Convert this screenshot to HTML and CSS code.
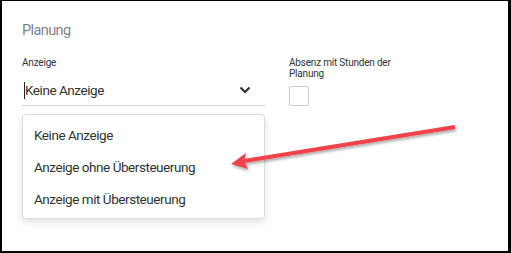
FILE: index.html
```html
<!DOCTYPE html>
<html lang="de">

<head>
  <meta charset="UTF-8">
  <title>Planung</title>
  <link rel="stylesheet" href="styles.css">
</head>

<body>
  <div class="frame">
    <h2 class="section-title">Planung</h2>
    <div class="row">
      <div class="field">
        <label class="field-label">Anzeige</label>
        <div class="select">
          <span class="caret"></span>
          <span class="select-value">Keine Anzeige</span>
          <svg class="chevron" width="12" height="8" viewBox="0 0 12 8">
            <path d="M1.5 1.5 L6 6 L10.5 1.5" fill="none" stroke="#333" stroke-width="2.2"/>
          </svg>
        </div>
        <ul class="dropdown">
          <li>Keine Anzeige</li>
          <li>Anzeige ohne Übersteuerung</li>
          <li>Anzeige mit Übersteuerung</li>
        </ul>
      </div>
      <div class="field field-small">
        <label class="field-label">Absenz mit Stunden der Planung</label>
        <div class="checkbox"></div>
      </div>
    </div>

    <!-- Pfeil auf die zweite Option -->
    <svg class="arrow" width="511" height="253" viewBox="0 0 511 253">
      <defs>
        <filter id="shadow" x="-10%" y="-50%" width="120%" height="200%">
          <feDropShadow dx="1" dy="2" stdDeviation="1.5" flood-color="#000" flood-opacity="0.35"/>
        </filter>
      </defs>
      <g filter="url(#shadow)">
        <line x1="455" y1="127" x2="244" y2="161" stroke="#f0434b" stroke-width="4"/>
        <path d="M231 164 L246 153 L244 161 L248 169 Z" fill="#f0434b"/>
      </g>
    </svg>
  </div>
</body>

</html>
```

FILE: styles.css
```css
body {
  margin: 0;
  font-family: Roboto, "Liberation Sans", sans-serif;
  color: #333;
  background: #fff;
}

.frame {
  position: relative;
  box-sizing: border-box;
  width: 511px;
  height: 253px;
  border-style: solid;
  border-color: #000;
  border-width: 1px 3px 2px 2px;
  padding: 21px 20px 0 20px;
  background: #fff;
}

.section-title {
  margin: 0;
  font-size: 14.5px;
  font-weight: 400;
  line-height: 18px;
  letter-spacing: -0.6px;
  color: #7b8490;
}

.row {
  display: flex;
  gap: 24px;
  margin-top: 17px;
}

.field {
  width: 243px;
}

.field-small {
  width: 110px;
}

.field-label {
  display: block;
  font-size: 10px;
  line-height: 11px;
  letter-spacing: -0.2px;
  color: #333;
}

.select {
  display: flex;
  align-items: center;
  box-sizing: border-box;
  height: 34px;
  margin-top: 4px;
  padding-top: 3px;
  border-bottom: 1px solid #d2d2d2;
}

.caret {
  width: 1px;
  height: 17px;
  margin-left: 2px;
  background: #222;
}

.select-value {
  flex: 1;
  font-size: 13.5px;
  letter-spacing: -0.45px;
  color: #333;
}

.chevron {
  margin-right: 14px;
}

.dropdown {
  list-style: none;
  margin: 8px 0 0 0;
  padding: 4px 0 3px 0;
  border: 1px solid #dcdcdc;
  border-radius: 4px;
  box-shadow: 0 3px 8px rgba(0, 0, 0, 0.12);
  background: #fff;
}

.dropdown li {
  padding: 0 11px;
  font-size: 13.5px;
  line-height: 32px;
  letter-spacing: -0.45px;
  color: #333;
}

.checkbox {
  width: 18px;
  height: 18px;
  margin-top: 7px;
  border: 1px solid #ccc;
  border-radius: 2px;
}

.arrow {
  position: absolute;
  top: -1px;
  left: -2px;
  pointer-events: none;
}
```
